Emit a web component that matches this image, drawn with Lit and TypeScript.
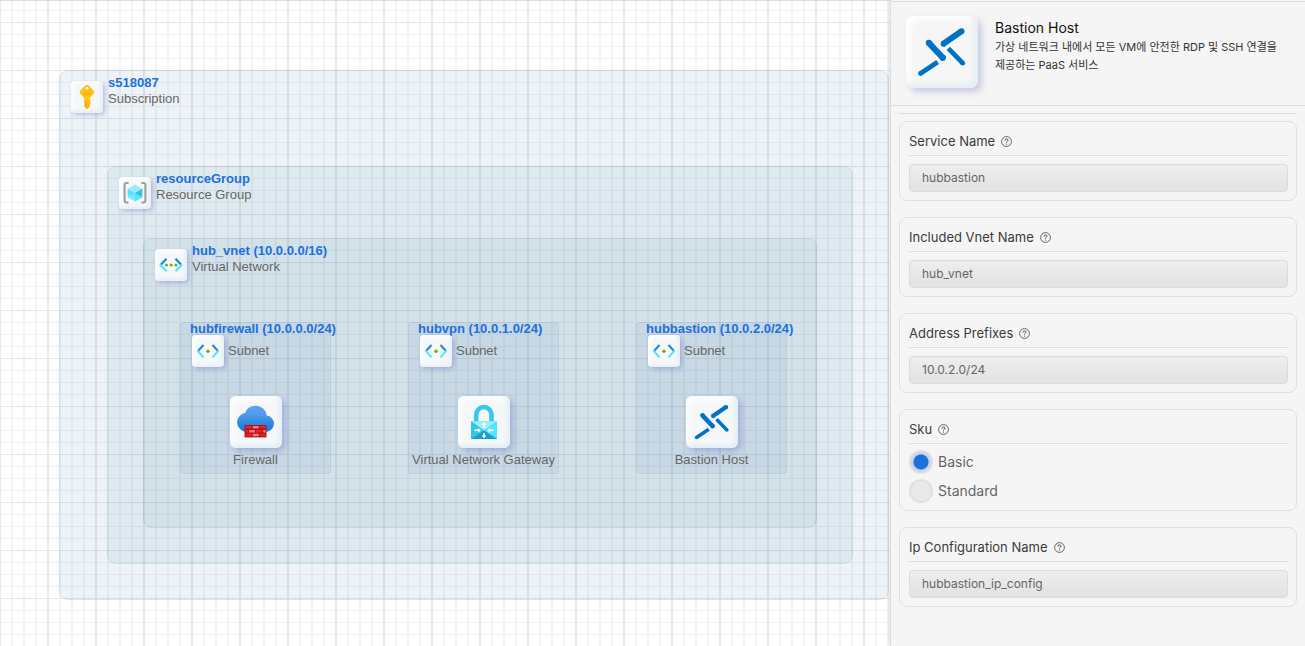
import { LitElement, html, css, svg, TemplateResult } from "lit";
import { customElement, property, state } from "lit/decorators.js";
import { styleMap } from "lit/directives/style-map.js";

type IconName = "key" | "group" | "vnet" | "subnet" | "firewall" | "gateway" | "bastion";

const drawings: Record<IconName, TemplateResult> = {
  key: svg`
    <defs><linearGradient id="k" x1="0" y1="0" x2="0" y2="1">
      <stop offset="0" stop-color="#feb516"/><stop offset="0.5" stop-color="#ffc81a"/><stop offset="1" stop-color="#fcae14"/>
    </linearGradient></defs>
    <path fill="url(#k)" d="M17.600 4.600L22.800 9.800Q24 11.300 22.800 12.800L18.800 17V18.600L19.800 19.800L18.800 21L19.800 22.200L18.800 23.400V25.600L16.900 27.600Q16 28.400 15.100 27.600L13.200 25.600V17L9.200 12.800Q8 11.300 9.200 9.800L14.400 4.600Q16 3.200 17.600 4.600z"/>
    <circle cx="16" cy="7.300" r="1.500" fill="#fffbe8"/>
    <path d="M12 12h8M12.500 13.700h7" stroke="#f8a312" stroke-width="0.900"/>
    <path d="M15 19.500v6" stroke="#f2a21a" stroke-width="0.900"/>`,
  group: svg`
    <path d="M9.500 6H7.500Q5.600 6 5.600 8V23.500Q5.600 25.500 7.500 25.500H9.500M22.500 6H24.500Q26.400 6 26.400 8V23.500Q26.400 25.500 24.500 25.500H22.500" fill="none" stroke="#9b9b9b" stroke-width="2"/>
    <path fill="#9cebff" d="M16 7.600l7.300 4.200L16 16l-7.300-4.200z"/>
    <path fill="#50e6ff" d="M8.700 11.800L16 16v8.300l-7.300-4.200z"/>
    <path fill="#32bedd" d="M23.300 11.800L16 16v8.300l7.300-4.200z"/>
    <path fill="#50e6ff" d="M16 16l7.300 4.100L16 24.300z"/>
    <path fill="#9cebff" d="M16 16l-7.300 4.100L16 24.300z" opacity="0.600"/>`,
  vnet: svg`
    <path d="M11.500 9.800L5.500 16" stroke="#1988d9" stroke-width="2.200"/>
    <path d="M5 15.500L11.500 22.200" stroke="#50e6ff" stroke-width="2.200"/>
    <path d="M20.500 9.800L26.500 16" stroke="#1988d9" stroke-width="2.200"/>
    <path d="M27 15.500L20.500 22.200" stroke="#50e6ff" stroke-width="2.200"/>
    <circle cx="11.500" cy="16" r="1.500" fill="#6bb100"/><circle cx="16.200" cy="16" r="1.500" fill="#6bb100"/><circle cx="21" cy="16" r="1.500" fill="#6bb100"/>`,
  subnet: svg`
    <path d="M11.500 10L6 16" stroke="#1988d9" stroke-width="2"/>
    <path d="M5.500 15.700L11.500 22.300" stroke="#50e6ff" stroke-width="2"/>
    <path d="M20.500 10L26 16" stroke="#1988d9" stroke-width="2"/>
    <path d="M26.500 15.700L20.500 22.300" stroke="#50e6ff" stroke-width="2"/>
    <circle cx="16" cy="16.200" r="1.700" fill="#6bb100"/>`,
  firewall: svg`
    <defs><linearGradient id="f" x1="0" y1="0" x2="0" y2="1">
      <stop offset="0" stop-color="#5ea0ef"/><stop offset="0.300" stop-color="#559cec"/><stop offset="1" stop-color="#0b7ad8"/>
    </linearGradient></defs>
    <path fill="url(#f)" d="M44 27.500a8.400 8.400 0 0 0-7.300-8A10.700 10.700 0 0 0 25.700 9.700a11 11 0 0 0-10.500 7.100A10 10 0 0 0 7 26.400a10 10 0 0 0 10.400 9.500H35.300A8.500 8.500 0 0 0 44 27.500z"/>
    <path fill="#b01116" d="M14.500 29h22v12.400h-22z"/>
    <path fill="#e62323" d="M15.400 30h6.400v2.600h-6.400zM29.600 30h6v2.600h-6zM15.400 33.900h2.800v2.600h-2.800zM25.900 33.900h6.300v2.600h-6.300zM15.400 37.700h6.400v2.600h-6.400zM29.600 37.700h6v2.600h-6z"/>
    <path fill="#ff7381" d="M22.800 30h5.900v2.600h-5.900zM19.200 33.900h5.800v2.600h-5.800zM33.200 33.900h2.500v2.600h-2.500zM22.800 37.700h5.900v2.600h-5.900z"/>`,
  gateway: svg`
    <path d="M18.200 26V19a7.600 8 0 0 1 15.300 0V26" fill="none" stroke="#32c8f0" stroke-width="4.600"/>
    <path fill="#32bedd" d="M13 25.300h26V43H13z"/>
    <path fill="#9cf0ff" d="M13 25.300h26L26 34.500z"/>
    <path fill="#50e6ff" d="M39 25.300V43L26 34.500z"/>
    <path fill="#36c6e8" d="M13 25.300V43L26 34.500z"/>
    <path fill="#1b9fc4" d="M13 43h26L26 34.500z"/>
    <path d="M26 32V28M26 37v4M16.500 34.300h5M35.500 34.300h-5" stroke="#fff" stroke-width="1.500"/>
    <path fill="#fff" d="M26 26.300l2.400 2.800h-4.800zM26 42.300l2.400-2.800h-4.800zM23 34.300l-2.800-2.400v4.800zM29.300 34.300l2.800-2.400v4.800z"/>`,
  bastion: svg`
    <g fill="none" stroke="#0072c6">
      <path d="M36.300 28.400L55.500 15.300" stroke-width="6"/>
      <path d="M22.800 26.800L38 43" stroke-width="6.200"/>
      <path d="M42.300 32.300L56.700 47.200" stroke-width="4.800"/>
      <path d="M14.500 57.500L31.600 46" stroke-width="4.800"/>
    </g>
    <g fill="#0072c6">
      <circle cx="55.500" cy="15.300" r="3"/><circle cx="37.500" cy="27.800" r="2.900"/>
      <circle cx="22.800" cy="26.800" r="3.100"/><circle cx="36.800" cy="41.800" r="3.100"/>
      <circle cx="56.700" cy="47.200" r="2.400"/><circle cx="14.500" cy="57.500" r="2.400"/>
    </g>`,
};

const boxes: Record<IconName, string> = {
  key: "0 0 32 32", group: "0 0 32 32", vnet: "0 0 32 32", subnet: "0 0 32 32",
  firewall: "0 0 52 52", gateway: "0 0 52 52", bastion: "0 0 72 72",
};

@customElement("service-tile")
class ServiceTile extends LitElement {
  @property() icon: IconName = "key";
  static styles = css`
    :host {
      display: block;
      flex: none;
      width: 32px;
      height: 32px;
      border-radius: 4px;
      background: #f6f7f9;
      box-shadow: 2px 2px 4px rgba(110, 110, 200, 0.4), inset -2px -2px 4px #e2eff6, inset 2px 2px 5px #ffffff;
    }
    :host([size="medium"]) { width: 52px; height: 52px; border-radius: 6px; box-shadow: 3px 3px 6px rgba(110, 110, 200, 0.4), inset -3px -3px 5px #dfeef5, inset 3px 3px 6px #ffffff; }
    :host([size="large"]) { width: 72px; height: 72px; border-radius: 8px; background: #f6f6f6; box-shadow: 4px 4px 6px rgba(110, 110, 200, 0.3), inset -4px -4px 6px #e3eff4, inset 4px 4px 6px #ffffff; }
    .drawing { display: block; width: 100%; height: 100%; }
  `;
  render() {
    return html`<svg class="drawing" viewBox=${boxes[this.icon]} aria-hidden="true">${drawings[this.icon]}</svg>`;
  }
}

interface Box { x: number; y: number; w: number; h: number; }
interface Scope extends Box { kind: string; icon: IconName; name: string; type: string; }
interface Subnet extends Box { name: string; service: string; icon: IconName; }

const scopes: Scope[] = [
  { kind: "subscription", icon: "key", name: "s518087", type: "Subscription", x: 59, y: 70, w: 830, h: 530 },
  { kind: "resources", icon: "group", name: "resourceGroup", type: "Resource Group", x: 107, y: 166, w: 746, h: 398 },
  { kind: "network", icon: "vnet", name: "hub_vnet (10.0.0.0/16)", type: "Virtual Network", x: 143, y: 238, w: 674, h: 290 },
];
const subnets: Subnet[] = [
  { name: "hubfirewall (10.0.0.0/24)", service: "Firewall", icon: "firewall", x: 180, y: 322, w: 151, h: 152 },
  { name: "hubvpn (10.0.1.0/24)", service: "Virtual Network Gateway", icon: "gateway", x: 408, y: 322, w: 151, h: 152 },
  { name: "hubbastion (10.0.2.0/24)", service: "Bastion Host", icon: "bastion", x: 636, y: 322, w: 151, h: 152 },
];
const place = (b: Box) => styleMap({ left: `${b.x}px`, top: `${b.y}px`, width: `${b.w}px`, height: `${b.h}px` });

@customElement("network-canvas")
class NetworkCanvas extends LitElement {
  static styles = css`
    :host {
      display: block;
      position: relative;
      overflow: hidden;
      font: 13px/16px "Liberation Sans", Arial, sans-serif;
      color: #666666;
      background-color: #ffffff;
      background-image:
        linear-gradient(#dcdcdc, #dcdcdc),
        linear-gradient(90deg, #e8eaeb 2px, transparent 2px),
        linear-gradient(#e4e6e7 1px, transparent 1px),
        linear-gradient(90deg, #f4f4f5 2px, transparent 2px),
        linear-gradient(#f0f0f1 1px, transparent 1px);
      background-size: 100% 1px, 48px 48px, 48px 48px, 12px 12px, 12px 12px;
      background-position: 0 0, 47px 22px, 47px 22px, 11px 10px, 11px 10px;
      background-repeat: no-repeat, repeat, repeat, repeat, repeat;
    }
    .scope, .subnet { position: absolute; box-sizing: border-box; border: 1px solid rgba(90, 140, 190, 0.12); }
    .scope { display: flex; align-items: flex-start; gap: 5px; padding: 4px 0 0 11px; border-radius: 9px; }
    .scope service-tile { margin-top: 6px; }
    .subscription { background: rgba(55, 122, 166, 0.09); }
    .resources { background: rgba(81, 143, 170, 0.09); }
    .network { background: rgba(101, 145, 173, 0.09); }
    .subnet { display: flex; flex-direction: column; border-radius: 4px; background: rgba(90, 137, 190, 0.09); }
    .name { color: #2070dc; font-weight: bold; white-space: nowrap; }
    .subnet .name { margin: -2px 0 0 9px; }
    .kind { display: flex; align-items: center; gap: 4px; margin: -2px 0 0 11px; }
    .service { display: flex; flex-direction: column; align-items: center; gap: 4px; margin-top: 29px; white-space: nowrap; }
  `;
  render() {
    return html`
      ${scopes.map((s) => html`
        <section class="scope ${s.kind}" style=${place(s)}>
          <service-tile icon=${s.icon}></service-tile>
          <div><div class="name">${s.name}</div><div>${s.type}</div></div>
        </section>`)}
      ${subnets.map((s) => html`
        <section class="subnet" style=${place(s)}>
          <div class="name">${s.name}</div>
          <div class="kind"><service-tile icon="subnet"></service-tile><span>Subnet</span></div>
          <div class="service"><service-tile size="medium" icon=${s.icon}></service-tile><span>${s.service}</span></div>
        </section>`)}
    `;
  }
}

const help = html`<svg class="help" viewBox="0 0 11 11" aria-hidden="true">
  <circle cx="5.500" cy="5.500" r="4.900" fill="none" stroke="#555" stroke-width="0.900"/>
  <path d="M4 4.500Q4 3 5.500 3T7 4.300C7 5.300 5.500 5.200 5.500 6.500" fill="none" stroke="#444" stroke-width="1"/>
  <circle cx="5.500" cy="8" r="0.600" fill="#444"/></svg>`;

@customElement("service-panel")
class ServicePanel extends LitElement {
  @state() sku = "Basic";
  static styles = css`
    :host {
      display: block;
      box-sizing: border-box;
      overflow: hidden;
      padding-top: 1px;
      background: #f5f5f5;
      border-left: 1px solid #dddddd;
      box-shadow: -1px 0 3px rgba(0, 0, 0, 0.12);
      font: 13px/20px Inter, "Noto Sans CJK KR", sans-serif;
      color: #3b3b3b;
    }
    .head { display: flex; gap: 17px; padding: 14px 15px 17px; border: solid #dddddd; border-width: 1px 0; }
    .title { margin: 2px 0 0; font-size: 14px; line-height: 20px; font-weight: 400; color: #111111; }
    .about { margin: 0; font-size: 11px; line-height: 18px; word-break: keep-all; color: #333333; }
    .form { display: grid; gap: 16px; margin: 7px 8px 0; padding-top: 7px; border-top: 1px solid #dddddd; }
    .card { margin: 0; min-width: 0; padding: 9px 8px 8px 9px; border: 1px solid #dfdfdf; border-radius: 8px; }
    .label { display: flex; align-items: center; gap: 6px; padding-bottom: 4px; border-bottom: 1px solid #dddddd; }
    .help { width: 11px; height: 11px; }
    .value {
      display: block; box-sizing: border-box; width: 100%; height: 28px; margin: 8px 0 0; padding: 0 12px 1px;
      border: 1px solid #dcdcdc; border-radius: 4px; background: linear-gradient(#eeeeee, #e2e2e2);
      font: 12px/18px Inter, sans-serif; color: #666666;
    }
    .choices { display: grid; gap: 5px; margin: 6px 0 -1px; }
    .choice { display: flex; align-items: center; gap: 5px; font-size: 14px; line-height: 24px; color: #666666; }
    .radio { appearance: none; box-sizing: border-box; width: 24px; height: 24px; margin: 0; border: 2px solid #e0e0e0; border-radius: 50%; background: #e9e9e9; }
    .radio:checked { border-color: #dbdfe5; background: radial-gradient(circle, #2070dc 7px, #c8d4e8 8px); }
  `;
  private field(id: string, label: string, value: string) {
    return html`<div class="card">
      <label class="label" for=${id}>${label}${help}</label>
      <input class="value" id=${id} type="text" readonly .value=${value} />
    </div>`;
  }
  render() {
    return html`
      <header class="head">
        <service-tile size="large" icon="bastion"></service-tile>
        <div>
          <h1 class="title">Bastion Host</h1>
          <p class="about">가상 네트워크 내에서 모든 VM에 안전한 RDP 및 SSH 연결을 제공하는 PaaS 서비스</p>
        </div>
      </header>
      <form class="form">
        ${this.field("service", "Service Name", "hubbastion")}
        ${this.field("vnet", "Included Vnet Name", "hub_vnet")}
        ${this.field("prefixes", "Address Prefixes", "10.0.2.0/24")}
        <div class="card" role="radiogroup" aria-labelledby="sku">
          <div class="label" id="sku">Sku${help}</div>
          <div class="choices">
            ${["Basic", "Standard"].map((option) => html`
              <label class="choice">
                <input class="radio" type="radio" name="sku" .checked=${this.sku === option} @change=${() => (this.sku = option)} />${option}
              </label>`)}
          </div>
        </div>
        ${this.field("ip", "Ip Configuration Name", "hubbastion_ip_config")}
      </form>`;
  }
}

@customElement("app-root")
class AppRoot extends LitElement {
  static styles = css`
    :host { display: flex; height: 100vh; }
    network-canvas { flex: 1; min-width: 0; }
    service-panel { flex: 0 0 415px; position: relative; }
  `;
  render() {
    return html`<network-canvas></network-canvas><service-panel></service-panel>`;
  }
}
